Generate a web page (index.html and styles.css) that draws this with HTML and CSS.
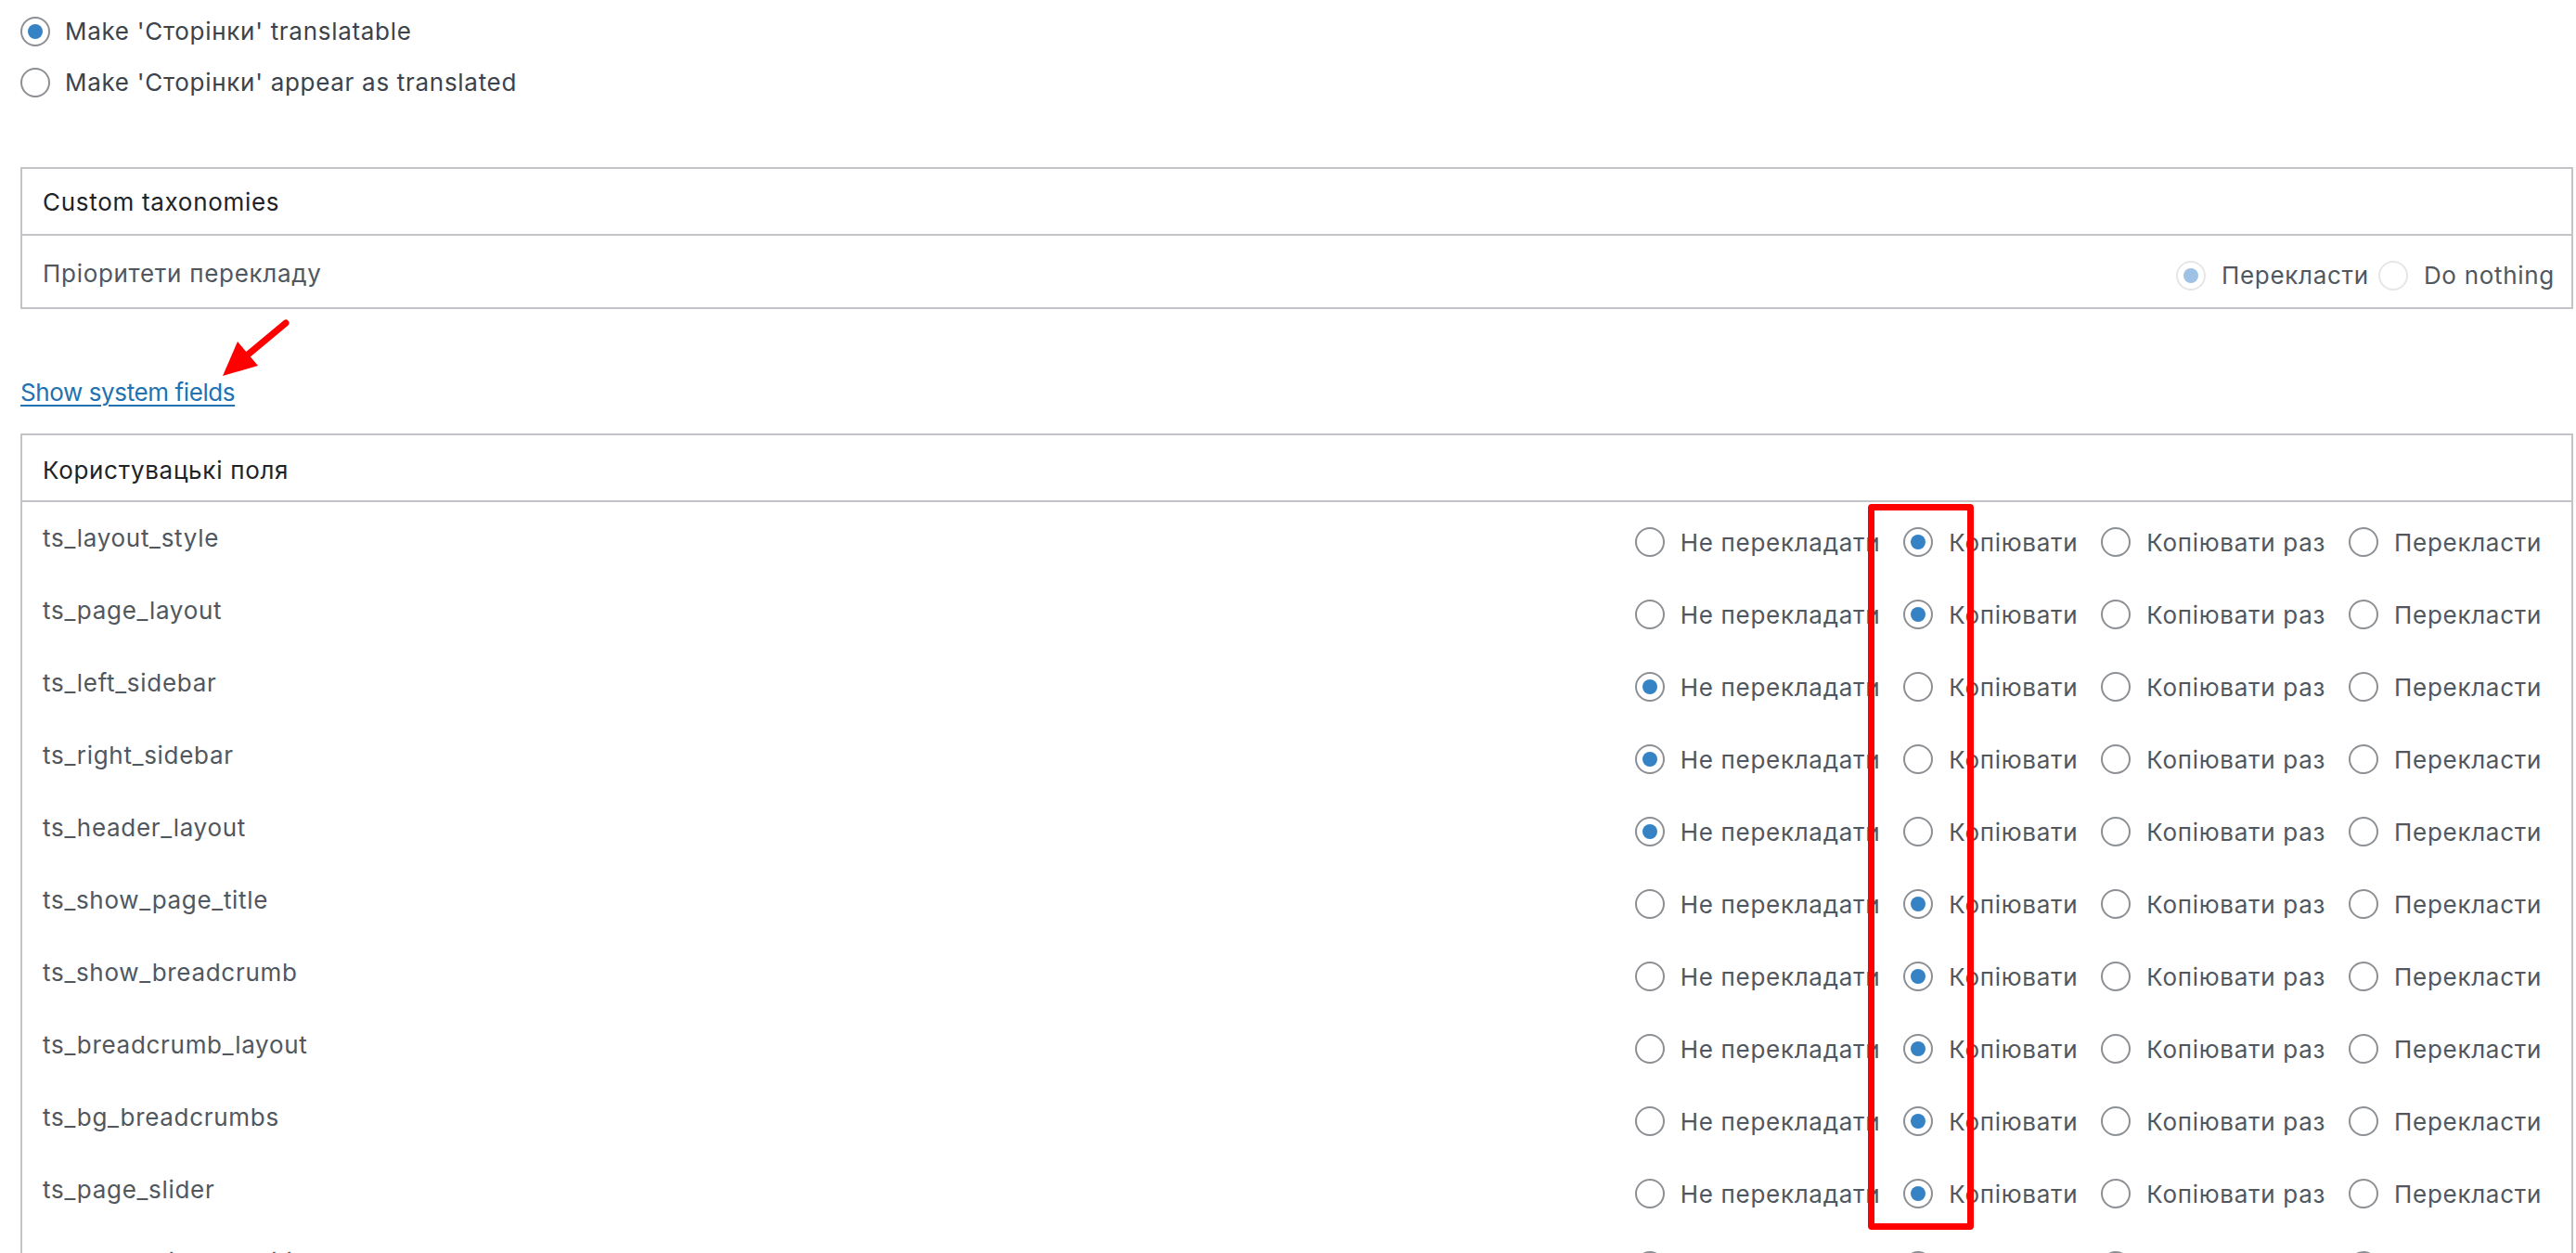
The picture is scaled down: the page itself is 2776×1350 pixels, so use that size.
FILE: index.html
```html
<!DOCTYPE html>
<html>
<head>
    <title>Multilingual content setup</title>
    <link rel="stylesheet" href="styles.css">
</head>
<body>
    <div class="wrap">
        <div class="mode-options">
            <label class="opt"><input type="radio" name="mode" checked> Make 'Сторінки' translatable</label>
            <label class="opt"><input type="radio" name="mode"> Make 'Сторінки' appear as translated</label>
        </div>

        <div class="box tax-box">
            <div class="box-head">Custom taxonomies</div>
            <div class="box-row">
                <span class="field-name">Пріоритети перекладу</span>
                <div class="choices disabled">
                    <label class="opt"><input type="radio" name="tax" checked disabled> Перекласти</label>
                    <label class="opt"><input type="radio" name="tax" disabled> Do nothing</label>
                </div>
            </div>
        </div>

        <p class="toggle-line"><a href="#" class="toggle-link">Show system fields</a></p>

        <div class="box fields-box" id="fields">
            <div class="box-head">Користувацькі поля</div>
        </div>
    </div>

    <div class="mark-box"></div>
    <svg class="mark-arrow" width="400" height="450" viewBox="0 0 400 450">
        <line x1="308" y1="348" x2="266" y2="383" stroke="#f00" stroke-width="7" stroke-linecap="round"/>
        <polygon points="240,405 256,368 278,394" fill="#f00"/>
    </svg>

    <script>
        const fields = [
            ["ts_layout_style", 1],
            ["ts_page_layout", 1],
            ["ts_left_sidebar", 0],
            ["ts_right_sidebar", 0],
            ["ts_header_layout", 0],
            ["ts_show_page_title", 1],
            ["ts_show_breadcrumb", 1],
            ["ts_breadcrumb_layout", 1],
            ["ts_bg_breadcrumbs", 1],
            ["ts_page_slider", 1],
            ["ts_page_slider_position", 1]
        ];
        const labels = ["Не перекладати", "Копіювати", "Копіювати раз", "Перекласти"];
        const box = document.querySelector("#fields");

        fields.forEach(([name, picked]) => {
            const row = document.createElement("div");
            row.className = "box-row";
            let html = '<span class="field-name">' + name + '</span><div class="choices">';
            labels.forEach((text, i) => {
                html += '<label class="opt"><input type="radio" name="' + name + '"' +
                    (i === picked ? ' checked' : '') + '> ' + text + '</label>';
            });
            html += '</div>';
            row.innerHTML = html;
            box.appendChild(row);
        });
    </script>
</body>
</html>
```

FILE: styles.css
```css
body {
    margin: 0;
    background: #fff;
    font-family: 'Inter', 'Noto Sans', sans-serif;
    font-size: 26px;
    letter-spacing: 0.7px;
    color: #3c434a;
    overflow: hidden;
}

.wrap {
    padding: 6px 3px 0 22px;
}

input[type="radio"] {
    appearance: none;
    -webkit-appearance: none;
    width: 32px;
    height: 32px;
    margin: 0;
    border: 2px solid #8c8f94;
    border-radius: 50%;
    background: #fff;
    display: inline-flex;
    align-items: center;
    justify-content: center;
    flex: none;
    box-sizing: border-box;
}

input[type="radio"]:checked::before {
    content: "";
    width: 16px;
    height: 16px;
    border-radius: 50%;
    background: #3582c4;
}

.opt {
    display: inline-flex;
    align-items: center;
    gap: 16px;
    white-space: nowrap;
}

.mode-options {
    display: flex;
    flex-direction: column;
}

.mode-options .opt {
    height: 55px;
}

.box {
    border: 2px solid #c3c4c7;
}

.tax-box {
    margin-top: 64px;
}

.box-head {
    height: 70px;
    display: flex;
    align-items: center;
    padding-left: 22px;
    color: #1d2327;
    border-bottom: 2px solid #c3c4c7;
}

.fields-box .box-head {
    height: 72px;
    padding-top: 4px;
    box-sizing: border-box;
}

.box-row {
    display: flex;
    align-items: center;
    justify-content: space-between;
    padding-left: 22px;
}

.tax-box .box-row {
    height: 77px;
    padding-right: 18px;
}

.fields-box .box-row {
    height: 78px;
    padding-right: 32px;
}

.field-name {
    color: #50575e;
    position: relative;
    top: -1px;
}

.tax-box .field-name {
    top: 2px;
}

.choices {
    display: flex;
    gap: 25px;
    position: relative;
    top: 4px;
    color: #50575e;
}

.choices .opt {
    gap: 17px;
}

.tax-box .choices {
    gap: 10px;
}

.choices.disabled input[type="radio"] {
    border-color: #e6e6e8;
}

.choices.disabled input[type="radio"]:checked::before {
    background: #9ec2e6;
}

.toggle-line {
    margin: 72px 0 26px;
    line-height: 36px;
}

.toggle-link {
    color: #2271b1;
    letter-spacing: -0.4px;
    text-decoration: underline;
    text-underline-offset: 4px;
    text-decoration-thickness: 2px;
}

.mark-box {
    position: absolute;
    left: 2013px;
    top: 543px;
    width: 114px;
    height: 782px;
    border: 7px solid #f00;
    border-radius: 4px;
    box-sizing: border-box;
}

.mark-arrow {
    position: absolute;
    left: 0;
    top: 0;
}
```
